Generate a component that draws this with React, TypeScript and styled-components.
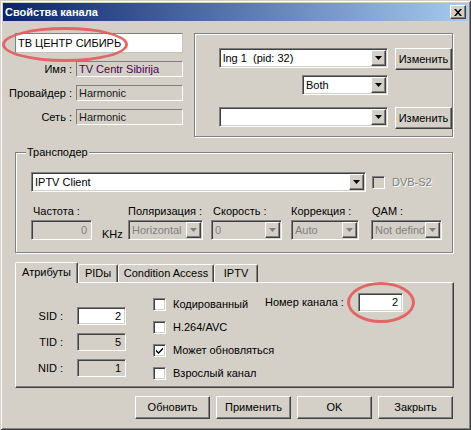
import styled, { createGlobalStyle, css } from 'styled-components';

const face = '#d4d0c8';

const GlobalStyle = createGlobalStyle`
  html, body {
    margin: 0;
    padding: 0;
  }
  body {
    background: ${face};
    font-family: "Liberation Sans", Arial, sans-serif;
    font-size: 11px;
    line-height: 13px;
    color: #000;
  }
`;

const sunken = css`
  border: 1px solid;
  border-color: #808080 #fff #fff #808080;
  box-shadow: inset 1px 1px #404040, inset -1px -1px ${face};
`;

const raised = css`
  border: 1px solid;
  border-color: #fff #404040 #404040 #fff;
  box-shadow: inset -1px -1px #808080;
`;

const Window = styled.div`
  position: relative;
  box-sizing: border-box;
  width: 471px;
  height: 430px;
  padding: 3px;
  background: ${face};
  box-shadow: inset 1px 1px ${face}, inset -1px -1px #404040, inset 2px 2px #fff,
    inset -2px -2px #808080;
  display: flex;
  flex-direction: column;
  overflow: hidden;
`;

const TitleBar = styled.div`
  flex: none;
  height: 18px;
  display: flex;
  align-items: center;
  justify-content: space-between;
  padding: 0 2px;
  background: linear-gradient(90deg, #0a246a 0%, #a6caf0 100%);
`;

const Title = styled.span`
  color: #fff;
  font-weight: bold;
  font-size: 11px;
`;

const CloseButton = styled.div`
  box-sizing: border-box;
  width: 16px;
  height: 14px;
  ${raised};
  background: ${face};
  display: flex;
  align-items: center;
  justify-content: center;
`;

const Body = styled.div`
  flex: 1;
  display: flex;
  flex-direction: column;
  padding: 12px 0 0 12px;
`;

const TopRow = styled.div`
  display: flex;
  gap: 11px;
  height: 104px;
`;

const LeftCol = styled.div`
  width: 168px;
  display: flex;
  flex-direction: column;
`;

const InfoGrid = styled.div`
  display: grid;
  grid-template-columns: 61px 107px;
  grid-auto-rows: 16px;
  row-gap: 8px;
  margin-top: 8px;
  align-items: center;
`;

const RightLabel = styled.span`
  display: flex;
  justify-content: flex-end;
  padding-right: 4px;
  white-space: nowrap;
`;

type FieldKind = 'plain' | 'edit' | 'static' | 'readonly' | 'disabled';

const Field = styled.div<{ $w: number; $h: number; $kind: FieldKind; $right?: boolean; $color?: string }>`
  box-sizing: border-box;
  width: ${(p) => p.$w}px;
  height: ${(p) => p.$h}px;
  padding: ${(p) => (p.$right ? '0 4px 0 2px' : '0 2px')};
  display: flex;
  align-items: center;
  justify-content: ${(p) => (p.$right ? 'flex-end' : 'flex-start')};
  white-space: nowrap;
  overflow: hidden;
  color: ${(p) => p.$color ?? (p.$kind === 'disabled' ? '#808080' : '#000')};
  background: ${(p) => (p.$kind === 'plain' || p.$kind === 'edit' ? '#fff' : face)};
  ${(p) =>
    p.$kind === 'plain'
      ? css`
          border: 1px solid;
          border-color: #808080 #c8c4bc #c8c4bc #808080;
        `
      : p.$kind === 'static'
      ? css`
          border: 1px solid;
          border-color: #808080 #fff #fff #808080;
        `
      : sunken};
`;

const GroupBox = styled.div<{ $w: number; $h: number; $pt: number; $pl: number; $mt?: number }>`
  position: relative;
  box-sizing: border-box;
  width: ${(p) => p.$w}px;
  height: ${(p) => p.$h}px;
  margin-top: ${(p) => p.$mt ?? 0}px;
  padding: ${(p) => `${p.$pt}px 0 0 ${p.$pl}px`};
  border: 1px solid #808080;
  box-shadow: inset 1px 1px #fff, 1px 1px #fff;
  flex: none;
`;

const Legend = styled.span`
  position: absolute;
  top: -7px;
  left: 10px;
  padding: 0 1px;
  background: ${face};
`;

const Row = styled.div<{ $mt?: number; $ml?: number; $gap?: number; $align?: string }>`
  display: flex;
  align-items: ${(p) => p.$align ?? 'flex-start'};
  gap: ${(p) => p.$gap ?? 0}px;
  margin-top: ${(p) => p.$mt ?? 0}px;
  margin-left: ${(p) => p.$ml ?? 0}px;
`;

const ComboBox = styled.div<{ $w: number; $disabled?: boolean }>`
  box-sizing: border-box;
  width: ${(p) => p.$w}px;
  height: 20px;
  padding: 1px;
  ${sunken};
  background: ${(p) => (p.$disabled ? face : '#fff')};
  color: ${(p) => (p.$disabled ? '#808080' : '#000')};
  display: flex;
  flex: none;
`;

const ComboText = styled.span`
  flex: 1;
  min-width: 0;
  padding-left: 2px;
  line-height: 16px;
  white-space: pre;
  overflow: hidden;
`;

const ComboArrow = styled.span`
  box-sizing: border-box;
  width: 15px;
  flex: none;
  ${raised};
  background: ${face};
  display: flex;
  align-items: center;
  justify-content: center;
`;

const PushButton = styled.button<{ $w: number; $h?: number }>`
  box-sizing: border-box;
  width: ${(p) => p.$w}px;
  height: ${(p) => p.$h ?? 22}px;
  padding: 0;
  margin: 0;
  ${raised};
  background: ${face};
  font: inherit;
  font-size: 11px;
  color: #000;
  flex: none;
`;

const Check = styled.span<{ $disabled?: boolean }>`
  box-sizing: border-box;
  width: 13px;
  height: 13px;
  flex: none;
  ${sunken};
  background: ${(p) => (p.$disabled ? face : '#fff')};
  display: flex;
  align-items: center;
  justify-content: center;
`;

const CheckItem = styled.label<{ $ml?: number }>`
  display: flex;
  align-items: center;
  gap: 7px;
  height: 14px;
  margin-left: ${(p) => p.$ml ?? 0}px;
  white-space: nowrap;
`;

const DisabledText = styled.span`
  color: #808080;
  text-shadow: 1px 1px #fff;
`;

const ParamCol = styled.div<{ $ml: number }>`
  display: flex;
  flex-direction: column;
  margin-left: ${(p) => p.$ml}px;
`;

const ParamLabel = styled.span<{ $pl?: number }>`
  height: 13px;
  margin-bottom: 2px;
  padding-left: ${(p) => p.$pl ?? 0}px;
  white-space: nowrap;
`;

const Unit = styled.span`
  width: 20px;
  margin-left: 10px;
  align-self: flex-end;
  margin-bottom: -1px;
`;

const TabStrip = styled.div`
  display: flex;
  align-items: flex-end;
  height: 20px;
  margin-top: 9px;
`;

const Tab = styled.div<{ $w: number; $active?: boolean }>`
  position: relative;
  z-index: ${(p) => (p.$active ? 2 : 0)};
  box-sizing: border-box;
  width: ${(p) => p.$w}px;
  height: ${(p) => (p.$active ? 21 : 18)}px;
  margin-bottom: ${(p) => (p.$active ? -1 : 0)}px;
  border: 1px solid;
  border-bottom: none;
  border-color: #fff #404040 transparent #fff;
  border-radius: 2px 2px 0 0;
  box-shadow: inset -1px 0 #808080;
  background: ${face};
  display: flex;
  align-items: ${(p) => (p.$active ? 'flex-start' : 'center')};
  padding-top: ${(p) => (p.$active ? 3 : 0)}px;
  justify-content: center;
  white-space: nowrap;
`;

const TabPanel = styled.div`
  position: relative;
  box-sizing: border-box;
  width: 439px;
  height: 106px;
  ${raised};
  display: flex;
  align-items: flex-start;
  padding: 10px 0 0 24px;
`;

const IdGrid = styled.div`
  display: grid;
  grid-template-columns: 27px 49px;
  grid-auto-rows: 18px;
  column-gap: 10px;
  row-gap: 8px;
  align-items: center;
  margin-top: 14px;
`;

const CheckList = styled.div`
  width: 112px;
  display: flex;
  flex-direction: column;
  gap: 9px;
  margin: 4px 0 0 27px;
`;

const ChannelNumber = styled.div`
  display: flex;
  align-items: center;
`;

const ChannelLabel = styled.span`
  width: 93px;
  white-space: nowrap;
`;

const ButtonBar = styled.div`
  width: 438px;
  display: flex;
  justify-content: flex-end;
  gap: 6px;
  margin-top: 8px;
`;

const Highlight = styled.div<{ $x: number; $y: number; $w: number; $h: number }>`
  position: absolute;
  left: ${(p) => p.$x}px;
  top: ${(p) => p.$y}px;
  width: ${(p) => p.$w}px;
  height: ${(p) => p.$h}px;
  box-sizing: border-box;
  border: 3px solid rgba(226, 92, 92, 0.92);
  border-radius: 50%;
  pointer-events: none;
`;

const Arrow = ({ disabled }: { disabled?: boolean }) => (
  <svg width="7" height="4" viewBox="0 0 7 4">
    <polygon points="0,0 7,0 3.5,4" fill={disabled ? '#808080' : '#000'} />
  </svg>
);

const Combo = ({ w, text = '', disabled }: { w: number; text?: string; disabled?: boolean }) => (
  <ComboBox $w={w} $disabled={disabled}>
    <ComboText>{text}</ComboText>
    <ComboArrow>
      <Arrow disabled={disabled} />
    </ComboArrow>
  </ComboBox>
);

const CheckMark = () => (
  <svg width="7" height="7" viewBox="0 0 7 7">
    <path d="M0 2.5 L2.5 5 L7 0.5 L7 2.5 L2.5 7 L0 4.5 Z" fill="#000" />
  </svg>
);

const params = [
  { label: 'Поляризация :', w: 75, ml: 6, text: 'Horizontal', pl: 0 },
  { label: 'Скорость :', w: 71, ml: 8, text: '0', pl: 2 },
  { label: 'Коррекция :', w: 68, ml: 9, text: 'Auto', pl: 0 },
  { label: 'QAM :', w: 71, ml: 12, text: 'Not definde', pl: 1 },
];

const tabs = [
  { name: 'Атрибуты', w: 63, active: true },
  { name: 'PIDы', w: 40 },
  { name: 'Condition Access', w: 96 },
  { name: 'IPTV', w: 44 },
];

const checks = [
  { label: 'Кодированный', checked: false },
  { label: 'H.264/AVC', checked: false },
  { label: 'Может обновляться', checked: true },
  { label: 'Взрослый канал', checked: false },
];

export default function App() {
  return (
    <>
      <GlobalStyle />
      <Window>
        <TitleBar>
          <Title>Свойства канала</Title>
          <CloseButton>
            <svg width="8" height="7" viewBox="0 0 8 7">
              <path d="M0 0 H2 L4 2.2 L6 0 H8 L5 3.5 L8 7 H6 L4 4.8 L2 7 H0 L3 3.5 Z" fill="#000" />
            </svg>
          </CloseButton>
        </TitleBar>

        <Body>
          <TopRow>
            <LeftCol>
              <Field $w={168} $h={20} $kind="plain">
                ТВ ЦЕНТР СИБИРЬ
              </Field>
              <InfoGrid>
                <RightLabel>Имя :</RightLabel>
                <Field $w={107} $h={16} $kind="static" $color="#4a0052">
                  TV Centr Sibirija
                </Field>
                <RightLabel>Провайдер :</RightLabel>
                <Field $w={107} $h={16} $kind="static" $color="#1a1a1a">
                  Harmonic
                </Field>
                <RightLabel>Сеть :</RightLabel>
                <Field $w={107} $h={16} $kind="static" $color="#1a1a1a">
                  Harmonic
                </Field>
              </InfoGrid>
            </LeftCol>

            <GroupBox $w={259} $h={104} $pt={14} $pl={24}>
              <Row $gap={7}>
                <Combo w={169} text="lng 1  (pid: 32)" />
                <PushButton $w={57}>Изменить</PushButton>
              </Row>
              <Row $mt={5} $ml={83}>
                <Combo w={86} text="Both" />
              </Row>
              <Row $mt={12} $gap={7}>
                <Combo w={169} />
                <PushButton $w={57}>Изменить</PushButton>
              </Row>
            </GroupBox>
          </TopRow>

          <GroupBox $w={438} $h={101} $pt={19} $pl={15} $mt={15}>
            <Legend>Транспoдер</Legend>
            <Row $align="center">
              <Combo w={335} text="IPTV Client" />
              <CheckItem $ml={6}>
                <Check $disabled />
                <DisabledText>DVB-S2</DisabledText>
              </CheckItem>
            </Row>
            <Row $mt={13} $align="stretch">
              <ParamCol $ml={0}>
                <ParamLabel $pl={2}>Частота :</ParamLabel>
                <Field $w={61} $h={20} $kind="disabled" $right>
                  0
                </Field>
              </ParamCol>
              <Unit>KHz</Unit>
              {params.map((p) => (
                <ParamCol key={p.label} $ml={p.ml}>
                  <ParamLabel $pl={p.pl}>{p.label}</ParamLabel>
                  <Combo w={p.w} text={p.text} disabled />
                </ParamCol>
              ))}
            </Row>
          </GroupBox>

          <TabStrip>
            {tabs.map((t) => (
              <Tab key={t.name} $w={t.w} $active={t.active}>
                {t.name}
              </Tab>
            ))}
          </TabStrip>
          <TabPanel>
            <IdGrid>
              <RightLabel>SID :</RightLabel>
              <Field $w={49} $h={18} $kind="edit" $right>
                2
              </Field>
              <RightLabel>TID :</RightLabel>
              <Field $w={49} $h={18} $kind="readonly" $right>
                5
              </Field>
              <RightLabel>NID :</RightLabel>
              <Field $w={49} $h={18} $kind="readonly" $right>
                1
              </Field>
            </IdGrid>
            <CheckList>
              {checks.map((c) => (
                <CheckItem key={c.label}>
                  <Check>{c.checked && <CheckMark />}</Check>
                  <span>{c.label}</span>
                </CheckItem>
              ))}
            </CheckList>
            <ChannelNumber>
              <ChannelLabel>Номер канала :</ChannelLabel>
              <Field $w={45} $h={19} $kind="edit" $right>
                2
              </Field>
            </ChannelNumber>
          </TabPanel>

          <ButtonBar>
            <PushButton $w={75} $h={23}>Обновить</PushButton>
            <PushButton $w={75} $h={23}>Применить</PushButton>
            <PushButton $w={75} $h={23}>OK</PushButton>
            <PushButton $w={75} $h={23}>Закрыть</PushButton>
          </ButtonBar>
        </Body>

        <Highlight $x={2} $y={27} $w={126} $h={35} />
        <Highlight $x={347} $y={282} $w={68} $h={41} />
      </Window>
    </>
  );
}
